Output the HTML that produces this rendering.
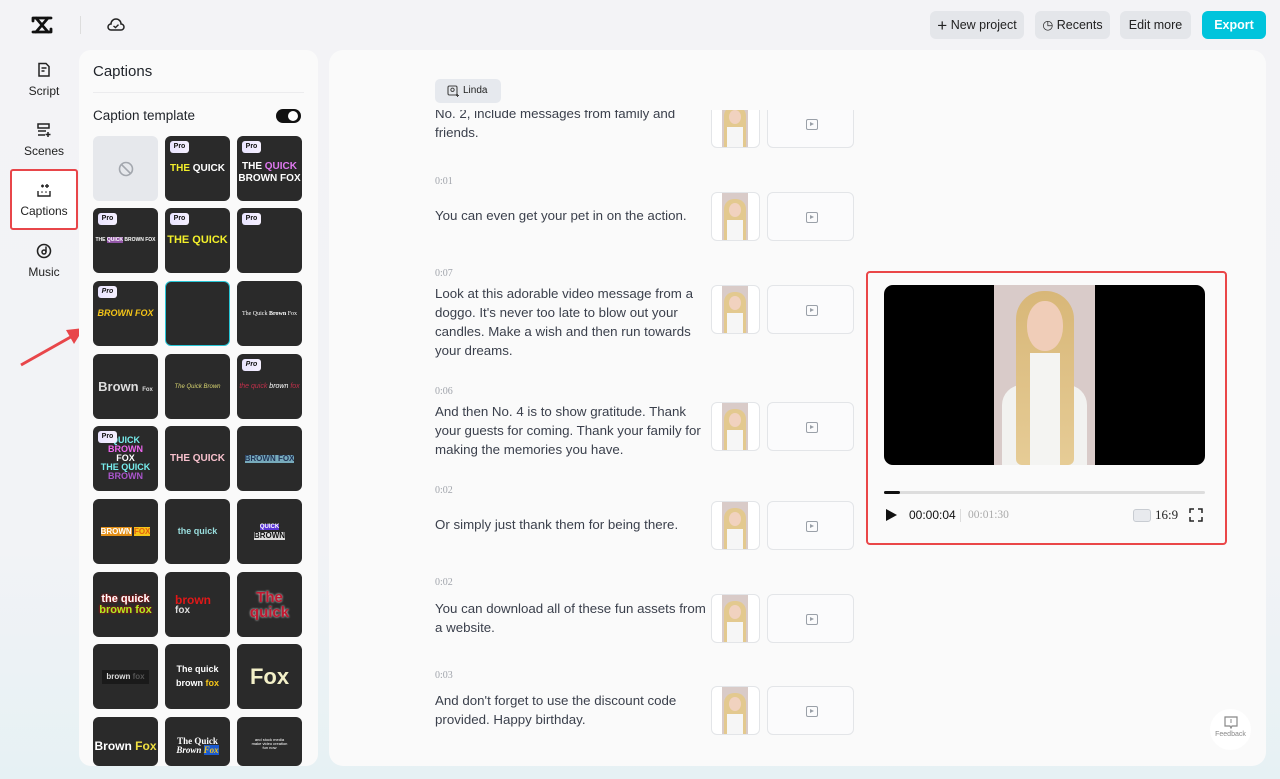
<!DOCTYPE html><html><head><meta charset="utf-8"><style>
*{box-sizing:border-box;margin:0;padding:0}
body{width:1280px;height:779px;overflow:hidden;font-family:"Liberation Sans",sans-serif;background:linear-gradient(180deg,#f3f3f6 0%,#f2f3f6 70%,#e6f1f4 100%);position:relative;color:#1f2329}
.a{position:absolute}
.nav{position:absolute;left:10px;width:68px;text-align:center;font-size:12px;color:#222}
.btn{position:absolute;top:11px;height:28px;border-radius:6px;background:#e4e6ea;font-size:12.5px;line-height:28px;text-align:center;color:#222}
.tile{position:absolute;width:65px;height:65px;border-radius:6px;background:#2a2a2a;overflow:hidden;font-weight:bold;text-align:center;color:#fff;display:flex;align-items:center;justify-content:center;flex-direction:column;line-height:1}
.pro{position:absolute;left:5px;top:5px;width:19px;height:12px;border-radius:3px;background:linear-gradient(90deg,#e9e4ff,#f5f0ff);color:#111;font-size:7px;line-height:12px;font-weight:bold}
.txt{position:absolute;left:435px;width:268px;font-size:13.3px;line-height:19px;color:#3b404c}
.tm{position:absolute;left:435px;font-family:"Liberation Serif",serif;font-size:10px;color:#a0a4ab}
.th{position:absolute;left:711px;width:49px;height:49px;border:1px solid #e3e5e8;border-radius:6px;background:#fff;overflow:hidden}
.th i{position:absolute;left:10px;top:0;width:26px;height:47px;background:#d9cbc8}
.th b{position:absolute;left:12px;top:6px;width:22px;height:41px;background:#e3c98f;border-radius:10px 10px 0 0}
.th em{position:absolute;left:17px;top:10px;width:12px;height:14px;background:#f1d2bf;border-radius:50%}
.th s{position:absolute;left:15px;top:27px;width:16px;height:20px;background:#f6f6f6}
.bx{position:absolute;left:767px;width:87px;height:49px;border:1px solid #e3e5e8;border-radius:6px;background:#fbfbfc}
.bx:after{content:"";position:absolute;left:38px;top:19px;width:10px;height:9px;border:1.3px solid #9aa0a8;border-radius:2px}
.bx:before{content:"";position:absolute;left:42px;top:22px;border-left:4px solid #9aa0a8;border-top:2px solid transparent;border-bottom:2px solid transparent}
</style></head><body>
<svg class="a" style="left:30px;top:15px" width="24" height="20" viewBox="0 0 24 20"><path d="M3 3h18M3 17h18M3 3v3M21 14v3M6 3l12 14M18 3L6 17" fill="none" stroke="#111" stroke-width="2.8" stroke-linecap="round"/></svg>
<div class="a" style="left:80px;top:16px;width:1px;height:18px;background:#ddd"></div>
<svg class="a" style="left:107px;top:17px" width="18" height="15" viewBox="0 0 18 15"><path d="M4 13a3 3 0 0 1 0-6 5 5 0 0 1 10 0 3 3 0 0 1 0 6z" fill="none" stroke="#222" stroke-width="1.5"/><path d="M6.5 9l2 1.6 3-3" fill="none" stroke="#222" stroke-width="1.4"/></svg>
<div class="nav" style="top:62px"><svg width="16" height="16" viewBox="0 0 16 16"><path d="M3 1.5h7l3 3V14H3z M5.5 6h5M5.5 9h3" fill="none" stroke="#222" stroke-width="1.5"/></svg><div style="margin-top:3px">Script</div></div>
<div class="nav" style="top:122px"><svg width="16" height="16" viewBox="0 0 16 16"><path d="M2 2h11v4H2zM2 9h8M2 13h7M12 10v5M9.5 12.5h5" fill="none" stroke="#222" stroke-width="1.5"/></svg><div style="margin-top:3px">Scenes</div></div>
<div class="a" style="left:10px;top:169px;width:68px;height:61px;border:2px solid #e8464a;border-radius:3px;background:#fff"></div>
<div class="nav" style="top:182px"><svg width="16" height="16" viewBox="0 0 16 16"><path d="M2 9v5h12V9M5 4h3M6.5 2.5v3M11 2v4M9 4h4" fill="none" stroke="#222" stroke-width="1.4"/><circle cx="6" cy="10" r=".8" fill="#222"/><circle cx="10" cy="10" r=".8" fill="#222"/></svg><div style="margin-top:3px">Captions</div></div>
<div class="nav" style="top:243px"><svg width="16" height="16" viewBox="0 0 16 16"><circle cx="8" cy="8" r="6.5" fill="none" stroke="#222" stroke-width="1.6"/><circle cx="8" cy="9" r="2" fill="none" stroke="#222" stroke-width="1.5"/><path d="M10 9V3.5" stroke="#222" stroke-width="1.5"/></svg><div style="margin-top:3px">Music</div></div>
<svg class="a" style="left:18px;top:322px" width="72" height="46" viewBox="0 0 72 46"><path d="M3 43L58 12" stroke="#e8464a" stroke-width="3"/><path d="M66 6L48 8l8 14z" fill="#e8464a"/></svg>
<div class="btn" style="left:930px;width:94px"><span style="font-size:17px;vertical-align:-2px">+</span> New project</div>
<div class="btn" style="left:1035px;width:75px">◷ Recents</div>
<div class="btn" style="left:1120px;width:71px">Edit more</div>
<div class="btn" style="left:1202px;width:64px;background:#00c4dc;color:#fff;font-weight:bold">Export</div>
<div class="a" style="left:79px;top:50px;width:239px;height:716px;background:#fafafa;border-radius:12px;overflow:hidden">
<div class="a" style="left:14px;top:13px;font-size:15px">Captions</div>
<div class="a" style="left:14px;top:42px;width:211px;height:1px;background:#ececee"></div>
<div class="a" style="left:14px;top:58px;font-size:13.5px">Caption template</div>
<div class="a" style="left:197px;top:59px;width:25px;height:14px;border-radius:7px;background:#111"><div class="a" style="left:12px;top:2px;width:10px;height:10px;border-radius:5px;background:#fff"></div></div>
</div>
<div class="tile" style="left:93px;top:136px;background:#e6e8ec"><svg width="16" height="16"><circle cx="8" cy="8" r="6.5" fill="none" stroke="#a3a7ae" stroke-width="1.6"/><path d="M3.5 3.5l9 9" stroke="#a3a7ae" stroke-width="1.6"/></svg></div>
<div class="tile" style="left:165px;top:136px;font-size:10px"><span class="pro">Pro</span><span><span style="color:#f2ee2a">THE</span> QUICK</span></div>
<div class="tile" style="left:237px;top:136px;font-size:10px;padding-top:8px"><span class="pro">Pro</span><span>THE <span style="color:#e078f0">QUICK</span></span><span style="margin-top:2px">BROWN FOX</span></div>
<div class="tile" style="left:93px;top:208px;font-size:5px"><span class="pro">Pro</span><span style="white-space:nowrap">THE <span style="background:#9155a6">QUICK</span> BROWN FOX</span></div>
<div class="tile" style="left:165px;top:208px;font-size:11px;color:#f3f02a"><span class="pro">Pro</span>THE QUICK</div>
<div class="tile" style="left:237px;top:208px"><span class="pro">Pro</span></div>
<div class="tile" style="left:93px;top:281px;font-size:9px;color:#f5c518;font-style:italic"><span class="pro">Pro</span>BROWN FOX</div>
<div class="tile" style="left:165px;top:281px;border:1.5px solid #27c6d6"></div>
<div class="tile" style="left:237px;top:281px;font-size:6px;font-weight:normal;font-family:'Liberation Serif',serif"><span style="white-space:nowrap">The Quick <b>Brown</b> Fox</span></div>
<div class="tile" style="left:93px;top:354px;font-size:13px;color:#ddd"><span style="white-space:nowrap">Brown <small style="font-size:6px">Fox</small></span></div>
<div class="tile" style="left:165px;top:354px;font-size:6px;color:#d8d470;font-style:italic;font-weight:normal">The Quick Brown</div>
<div class="tile" style="left:237px;top:354px;font-size:7px;color:#c0304a;font-style:italic;font-weight:normal"><span class="pro">Pro</span><span style="white-space:nowrap">the quick <span style="color:#fff">brown</span> fox</span></div>
<div class="tile" style="left:93px;top:426px;font-size:9px;color:#e6e"><span class="pro">Pro</span><span style="color:#7ee">QUICK</span><span>BROWN</span><span style="color:#fff">FOX</span><span style="color:#7ee">THE QUICK</span><span style="color:#a5c">BROWN</span></div>
<div class="tile" style="left:165px;top:426px;font-size:10px;color:#f7c0cc">THE QUICK</div>
<div class="tile" style="left:237px;top:426px;font-size:8px;color:#235"><span style="background:#7ab;white-space:nowrap">BROWN FOX</span></div>
<div class="tile" style="left:93px;top:499px;font-size:8px"><span style="white-space:nowrap"><span style="background:#e39018">BROWN</span> <span style="background:#f5c518;color:#e06010">FOX</span></span></div>
<div class="tile" style="left:165px;top:499px;font-size:9px;color:#9dd">the quick</div>
<div class="tile" style="left:237px;top:499px;font-size:8px;color:#111"><span style="background:#5b35d5;color:#fff;font-size:6px">QUICK</span><span style="background:#ddd;margin-top:2px">BROWN</span></div>
<div class="tile" style="left:93px;top:572px;font-size:11px;color:#fff"><span style="text-shadow:0 0 2px #e00">the quick</span><span style="color:#ae2;text-shadow:0 0 2px #e00">brown fox</span></div>
<div class="tile" style="left:165px;top:572px;font-size:12px;color:#e01818;align-items:flex-start;padding-left:10px"><span>brown</span><span style="color:#ddd;font-size:10px">fox</span></div>
<div class="tile" style="left:237px;top:572px;font-size:15px;color:#c01830;text-shadow:0 0 2px #fff"><span>The</span><span>quick</span></div>
<div class="tile" style="left:93px;top:644px;font-size:8px;color:#ddd"><span style="background:#1a1a1a;padding:3px 4px;white-space:nowrap">brown <span style="color:#555">fox</span></span></div>
<div class="tile" style="left:165px;top:644px;font-size:9px"><span>The quick</span><span style="margin-top:5px">brown <span style="color:#f5c518">fox</span></span></div>
<div class="tile" style="left:237px;top:644px;font-size:22px;color:#f3f0c8">Fox</div>
<div class="tile" style="left:93px;top:717px;height:49px;font-size:12px;padding-top:8px"><span style="white-space:nowrap">Brown <span style="color:#f0e040">Fox</span></span></div>
<div class="tile" style="left:165px;top:717px;height:49px;font-size:9px;font-family:'Liberation Serif',serif;padding-top:8px"><span>The Quick</span><span style="font-style:italic">Brown <span style="background:#1a5ad0;color:#f5c518">Fox</span></span></div>
<div class="tile" style="left:237px;top:717px;height:49px;font-size:4px;font-weight:normal;padding-top:4px">and stock media<br>make video creation<br>fun now</div>
<div class="a" style="left:329px;top:50px;width:937px;height:716px;background:#fafafa;border-radius:14px;overflow:hidden">
<div class="a" style="left:0;top:60px;width:937px;height:656px;overflow:hidden">
<div style="position:absolute;left:-329px;top:-110px;width:1280px;height:779px">
<div class="txt" style="top:104px">No. 2, include messages from family and<br>friends.</div>
<div class="th" style="top:99px"><i></i><b></b><em></em><s></s></div><div class="bx" style="top:99px"></div>
</div></div>
<div class="a" style="left:106px;top:29px;width:66px;height:24px;border-radius:5px;background:#e6e9ee;font-size:10px;line-height:24px;padding-left:28px;color:#222">Linda</div>
<svg class="a" style="left:118px;top:35px" width="12" height="12" viewBox="0 0 12 12"><rect x="1" y="1" width="9" height="9" rx="1.5" fill="none" stroke="#444" stroke-width="1.1"/><circle cx="5.5" cy="4.8" r="1.7" fill="none" stroke="#444"/><path d="M9 10.5h3M10.5 9v3" stroke="#444"/></svg>
</div>
<div class="tm" style="top:176px">0:01</div>
<div class="txt" style="top:206px">You can even get your pet in on the action.</div>
<div class="th" style="top:192px"><i></i><b></b><em></em><s></s></div><div class="bx" style="top:192px"></div>
<div class="tm" style="top:268px">0:07</div>
<div class="txt" style="top:284px">Look at this adorable video message from a doggo. It's never too late to blow out your candles. Make a wish and then run towards your dreams.</div>
<div class="th" style="top:285px"><i></i><b></b><em></em><s></s></div><div class="bx" style="top:285px"></div>
<div class="tm" style="top:386px">0:06</div>
<div class="txt" style="top:402px">And then No. 4 is to show gratitude. Thank your guests for coming. Thank your family for making the memories you have.</div>
<div class="th" style="top:402px"><i></i><b></b><em></em><s></s></div><div class="bx" style="top:402px"></div>
<div class="tm" style="top:485px">0:02</div>
<div class="txt" style="top:515px">Or simply just thank them for being there.</div>
<div class="th" style="top:501px"><i></i><b></b><em></em><s></s></div><div class="bx" style="top:501px"></div>
<div class="tm" style="top:577px">0:02</div>
<div class="txt" style="top:599px;width:276px">You can download all of these fun assets from a website.</div>
<div class="th" style="top:594px"><i></i><b></b><em></em><s></s></div><div class="bx" style="top:594px"></div>
<div class="tm" style="top:670px">0:03</div>
<div class="txt" style="top:691px">And don't forget to use the discount code provided. Happy birthday.</div>
<div class="th" style="top:686px"><i></i><b></b><em></em><s></s></div><div class="bx" style="top:686px"></div>
<div class="a" style="left:866px;top:271px;width:361px;height:274px;border:2.5px solid #ea4648;border-radius:4px;background:#fafafa"></div>
<div class="a" style="left:884px;top:285px;width:321px;height:180px;background:#000;border-radius:9px;overflow:hidden">
<div class="a" style="left:110px;top:0;width:101px;height:180px;background:#d9cbc9;overflow:hidden">
<div class="a" style="left:8px;top:100px;width:85px;height:80px;background:#f2f2f0;border-radius:20px 20px 0 0"></div>
<div class="a" style="left:22px;top:6px;width:58px;height:174px;background:linear-gradient(#d8b778,#e6cc96);border-radius:28px 28px 6px 6px"></div>
<div class="a" style="left:33px;top:16px;width:36px;height:50px;background:#f0cdb8;border-radius:48%"></div>
<div class="a" style="left:36px;top:68px;width:30px;height:112px;background:#f4f4f2"></div>
</div></div>
<div class="a" style="left:884px;top:491px;width:321px;height:3px;background:#ddd;border-radius:2px"><div style="width:16px;height:3px;background:#111;border-radius:2px"></div></div>
<div class="a" style="left:886px;top:509px;width:0;height:0;border-left:11px solid #111;border-top:6.5px solid transparent;border-bottom:6.5px solid transparent"></div>
<div class="a" style="left:909px;top:508px;font-size:12px;color:#111">00:00:04</div>
<div class="a" style="left:960px;top:509px;width:1px;height:13px;background:#ddd"></div>
<div class="a" style="left:968px;top:509px;font-size:11.5px;color:#aaa;font-family:'Liberation Serif',serif">00:01:30</div>
<div class="a" style="left:1133px;top:509px;width:18px;height:13px;border:1px solid #c8ccd2;border-radius:3px;background:#e8eaee"></div>
<div class="a" style="left:1155px;top:507px;font-size:13px;font-family:'Liberation Serif',serif;color:#222">16:9</div>
<svg class="a" style="left:1189px;top:508px" width="14" height="14"><path d="M1 5V1h4M9 1h4v4M13 9v4H9M5 13H1V9" fill="none" stroke="#222" stroke-width="1.5"/></svg>
<div class="a" style="left:1210px;top:709px;width:41px;height:41px;border-radius:50%;background:#fff;text-align:center;font-size:7px;color:#888;padding-top:7px"><svg width="14" height="13"><path d="M1 1h12v9H8l-1 2-1-2H1z" fill="none" stroke="#888" stroke-width="1.2"/><path d="M7 3v4" stroke="#888"/></svg><div>Feedback</div></div>
</body></html>
